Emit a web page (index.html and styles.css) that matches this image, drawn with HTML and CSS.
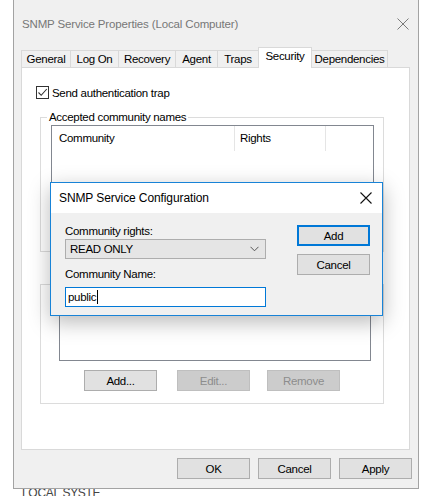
FILE: index.html
```html
<!DOCTYPE html>
<html>
<head>
<meta charset="utf-8">
<link rel="stylesheet" href="styles.css">
</head>
<body>
<div class="window">
  <div class="titlebar">
    <span class="title">SNMP Service Properties (Local Computer)</span>
    <svg class="close" width="12" height="12" viewBox="0 0 12 12"><path d="M0.5 0.5 L11.5 11.5 M11.5 0.5 L0.5 11.5" stroke="#7a7a7a" stroke-width="1"/></svg>
  </div>
  <div class="tabs">
    <div class="tab">General</div>
    <div class="tab">Log On</div>
    <div class="tab">Recovery</div>
    <div class="tab">Agent</div>
    <div class="tab">Traps</div>
    <div class="tab active">Security</div>
    <div class="tab">Dependencies</div>
  </div>
  <div class="panel">
    <label class="check">
      <span class="box"><svg width="11" height="11" viewBox="0 0 11 11"><path d="M1.5 5.5 L4.2 8.3 L9.8 2" fill="none" stroke="#333" stroke-width="1.1"/></svg></span>
      <span>Send authentication trap</span>
    </label>
    <div class="group g1">
      <span class="legend">Accepted community names</span>
      <div class="list l1">
        <div class="lhead">
          <div class="col c1">Community</div>
          <div class="col c2">Rights</div>
          <div class="col c3"></div>
        </div>
      </div>
    </div>
    <div class="group g2">
      <div class="list l2"></div>
      <div class="gbtns">
        <button class="btn">Add...</button>
        <button class="btn dis b2">Edit...</button>
        <button class="btn dis b3">Remove</button>
      </div>
    </div>
  </div>
  <div class="footer">
    <button class="btn">OK</button>
    <button class="btn">Cancel</button>
    <button class="btn">Apply</button>
  </div>

  <div class="dialog">
    <div class="dtitle">
      <span>SNMP Service Configuration</span>
      <svg width="12" height="12" viewBox="0 0 12 12"><path d="M0.5 0.5 L11.5 11.5 M11.5 0.5 L0.5 11.5" stroke="#111" stroke-width="1.1"/></svg>
    </div>
    <div class="dbody">
      <div class="fields">
        <div class="lbl">Community rights:</div>
        <div class="combo"><span>READ ONLY</span>
          <svg width="9" height="6" viewBox="0 0 9 6"><path d="M0.5 0.8 L4.5 4.8 L8.5 0.8" fill="none" stroke="#555" stroke-width="1"/></svg>
        </div>
        <div class="lbl l2b">Community Name:</div>
        <div class="input">public<span class="caret"></span></div>
      </div>
      <div class="dbtns">
        <button class="btn def">Add</button>
        <button class="btn">Cancel</button>
      </div>
    </div>
  </div>
</div>
<div class="below">LOCAL SYSTE</div>
</body>
</html>
```
FILE: styles.css
```css
* { box-sizing: border-box; }
html, body { margin: 0; padding: 0; background: #fff; }
body {
  font-family: "Liberation Sans", Arial, sans-serif;
  font-size: 11.5px;
  letter-spacing: -0.3px;
  color: #000;
  width: 434px;
  height: 496px;
  overflow: hidden;
}
.window {
  position: relative;
  margin-left: 13px;
  width: 406px;
  height: 489px;
  background: #f0f0f0;
  border: 1px solid #a3a3a3;
  border-top: none;
}
.titlebar {
  height: 47px;
  display: flex;
  align-items: center;
  justify-content: space-between;
  padding: 0 8px 0 8px;
  background: #f0f0f0;
}
.title { font-size: 11.5px; color: #777; letter-spacing: -0.15px; margin-top: 1px; }
.close { margin-right: 1px; }
.tabs {
  display: flex;
  align-items: flex-end;
  height: 20px;
  padding-left: 7px;
}
.tab {
  height: 17px;
  padding: 0;
  text-align: center;
  white-space: nowrap;
  border: 1px solid #d9d9d9;
  border-bottom: none;
  border-right: none;
  background: #f0f0f0;
  line-height: 16px;
}
.tab:nth-child(1) { width: 49px; }
.tab:nth-child(2) { width: 48px; }
.tab:nth-child(3) { width: 57px; }
.tab:nth-child(4) { width: 42px; }
.tab:nth-child(5) { width: 41px; }
.tab:nth-child(7) { width: 77px; border-right: 1px solid #d9d9d9; }
.tab.active {
  width: 54px;
  height: 21px;
  background: #fff;
  line-height: 17px;
  position: relative;
  top: 1px;
  z-index: 1;
  border-right: 1px solid #d9d9d9;
  margin-right: -1px;
}
.panel {
  margin-left: 7px;
  width: 389px;
  height: 383px;
  background: #fff;
  border: 1px solid #d9d9d9;
  padding: 18px 0 0 14px;
  display: flex;
  flex-direction: column;
}
.check { display: flex; align-items: center; gap: 3px; height: 13px; }
.box {
  width: 13px; height: 13px;
  border: 1px solid #333;
  display: flex; align-items: center; justify-content: center;
}
.group {
  position: relative;
  margin-left: 4px;
  width: 344px;
  border: 1px solid #dcdcdc;
}
.g1 { margin-top: 18px; height: 135px; }
.g2 { margin-top: 32px; height: 120px; display: flex; flex-direction: column; }
.legend {
  position: absolute;
  left: 6px; top: -8px;
  background: #fff;
  padding: 0 2px;
  line-height: 14px;
}
.list {
  background: #fff;
  border: 1px solid #828790;
}
.l1 { margin: 7px 0 0 10px; width: 323px; height: 125px; }
.lhead { display: flex; height: 25px; }
.col { padding-left: 7px; line-height: 24px; border-right: 1px solid #e5e5e5; }
.c1 { width: 183px; }
.c2 { width: 91px; padding-left: 5px; }
.c3 { border: none; }
.l2 { margin: 14px 0 0 18px; width: 312px; height: 62px; }
.gbtns { display: flex; margin-top: 9px; margin-left: 43px; }
.btn {
  font: inherit;
  letter-spacing: inherit;
  width: 73px;
  height: 21px;
  padding: 0;
  background: #e1e1e1;
  border: 1px solid #adadad;
  color: #000;
}
.dis { background: #cccccc; border-color: #bfbfbf; color: #8d8d8d; }
.b2 { margin-left: 20px; }
.b3 { margin-left: 17px; }
.footer {
  display: flex;
  justify-content: flex-end;
  gap: 8px;
  padding: 8px 6px 0 0;
}
.dialog {
  position: absolute;
  left: 36px;
  top: 182px;
  width: 333px;
  height: 134px;
  border: 1px solid #1883d7;
  background: #f0f0f0;
  box-shadow: 0 6px 20px rgba(0,0,0,0.28);
  display: flex;
  flex-direction: column;
}
.dtitle {
  height: 30px;
  background: #fff;
  display: flex;
  align-items: center;
  justify-content: space-between;
  padding: 0 10px 0 8px;
  font-size: 12px;
  letter-spacing: -0.1px;
}
.dbody {
  display: flex;
  padding: 11px 10px 0 14px;
}
.fields { width: 232px; }
.lbl { line-height: 14px; }
.combo {
  margin-top: 1px;
  width: 201px;
  height: 20px;
  background: #e5e5e5;
  border: 1px solid #adadad;
  display: flex;
  align-items: center;
  justify-content: space-between;
  padding: 0 6px 0 4px;
}
.l2b { margin-top: 8px; }
.input {
  margin-top: 6px;
  width: 201px;
  height: 20px;
  background: #fff;
  border: 1px solid #0078d7;
  padding: 0 2px;
  line-height: 18px;
  display: flex;
  align-items: center;
}
.caret { width: 1px; height: 14px; background: #000; margin-left: 1px; }
.dbtns { display: flex; flex-direction: column; gap: 8px; margin-top: 1px; }
.def { border: 2px solid #0078d7; }
.below {
  margin: 0 0 0 22px;
  line-height: 12px;
  margin-top: -2px;
  font-size: 12px;
  color: #444;
}
```
